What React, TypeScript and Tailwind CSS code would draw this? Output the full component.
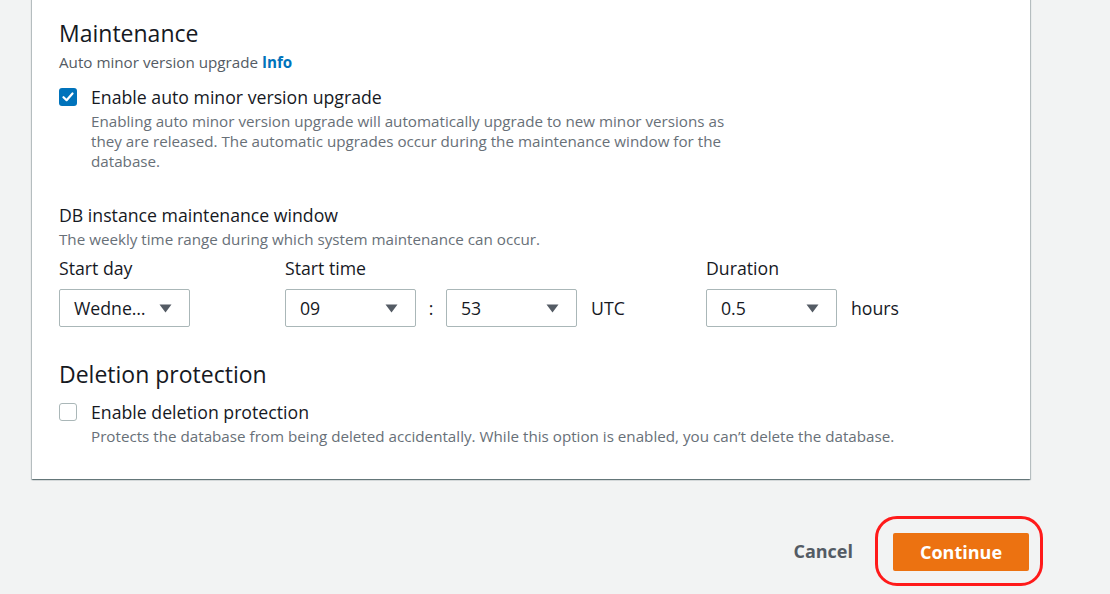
import React from 'react';

const Caret = () => (
  <svg width="13" height="9" viewBox="0 0 13 9" className="shrink-0">
    <path d="M0.5 0.5 H12.5 L6.5 8.5 Z" fill="#545b64" />
  </svg>
);

const Select: React.FC<{ value: string }> = ({ value }) => (
  <div className="flex h-[38px] w-[131px] items-center justify-between rounded-[2px] border border-[#aab7b8] bg-white pl-[14px] pr-[17px] text-[17.7px] text-[#16191f]">
    <span>{value}</span>
    <Caret />
  </div>
);

const CheckBox: React.FC<{ checked?: boolean }> = ({ checked }) =>
  checked ? (
    <div className="flex h-[18px] w-[18px] shrink-0 items-center justify-center rounded-[3px] bg-[#0073bb]">
      <svg width="12" height="10" viewBox="0 0 12 10">
        <path d="M1.5 5.2 L4.6 8.2 L10.5 1.5" fill="none" stroke="white" strokeWidth="2.2" strokeLinecap="round" strokeLinejoin="round" />
      </svg>
    </div>
  ) : (
    <div className="h-[18px] w-[18px] shrink-0 rounded-[3px] border border-[#aab7b8] bg-white" />
  );

const App: React.FC = () => {
  return (
    <div
      className="h-[594px] w-[1110px] overflow-hidden bg-[#f2f3f3] text-[#16191f]"
      style={{ fontFamily: '"Open Sans", "Noto Sans", Arial, sans-serif' }}
    >
      {/* Card */}
      <div className="-mt-[4px] ml-[32px] w-[998px] bg-white pl-[27px] pr-[26px] pt-[23px] pb-[33px] shadow-[0_1px_1px_0_rgba(0,28,36,0.35),1px_1px_1px_0_rgba(0,28,36,0.2),-1px_1px_1px_0_rgba(0,28,36,0.2)]">
        {/* Maintenance */}
        <h2 className="text-[23px] leading-[28px]">Maintenance</h2>
        <div className="mt-[5px] text-[15.2px] leading-[20px] text-[#545b64]">
          Auto minor version upgrade <span className="font-bold text-[#0073bb]">Info</span>
        </div>

        <div className="mt-[13px] flex gap-[14px]">
          <div className="pt-[3px]">
            <CheckBox checked />
          </div>
          <div>
            <div className="text-[17.7px] leading-[24px]">Enable auto minor version upgrade</div>
            <p className="mt-[2px] w-[660px] text-[15.2px] leading-[20px] text-[#687078]">
              Enabling auto minor version upgrade will automatically upgrade to new minor versions as
              they are released. The automatic upgrades occur during the maintenance window for the
              database.
            </p>
          </div>
        </div>

        <div className="mt-[32px] text-[17.7px] leading-[24px]">DB instance maintenance window</div>
        <div className="mt-[2px] text-[15.2px] leading-[20px] text-[#687078]">
          The weekly time range during which system maintenance can occur.
        </div>

        <div className="mt-[7px] flex">
          <div className="w-[226px]">
            <div className="text-[17.7px] leading-[24px]">Start day</div>
            <div className="mt-[9px]">
              <Select value="Wedne…" />
            </div>
          </div>
          <div className="w-[421px]">
            <div className="text-[17.7px] leading-[24px]">Start time</div>
            <div className="mt-[9px] flex items-center">
              <Select value="09" />
              <span className="w-[30px] text-center text-[17.7px]">:</span>
              <Select value="53" />
              <span className="ml-[14px] text-[17.7px]">UTC</span>
            </div>
          </div>
          <div>
            <div className="text-[17.7px] leading-[24px]">Duration</div>
            <div className="mt-[9px] flex items-center">
              <Select value="0.5" />
              <span className="ml-[14px] text-[17.7px]">hours</span>
            </div>
          </div>
        </div>

        {/* Deletion protection */}
        <h2 className="mt-[33px] text-[23px] leading-[28px]">Deletion protection</h2>
        <div className="mt-[12px] flex gap-[14px]">
          <div className="pt-[3px]">
            <CheckBox />
          </div>
          <div>
            <div className="text-[17.7px] leading-[24px]">Enable deletion protection</div>
            <p className="mt-[2px] text-[15.2px] leading-[20px] text-[#687078]">
              Protects the database from being deleted accidentally. While this option is enabled, you can’t delete the database.
            </p>
          </div>
        </div>
      </div>

      {/* Footer */}
      <div className="mt-[37px] flex items-center justify-end gap-[22px] pr-[67px]">
        <button className="text-[18px] font-bold text-[#545b64]">Cancel</button>
        <div className="rounded-[22px] border-[3px] border-[#ff1a1a] pb-[12px] pl-[15px] pr-[11px] pt-[14px]">
          <button className="h-[38px] w-[136px] rounded-[2px] bg-[#ec7211] text-[18px] font-bold text-white">
            Continue
          </button>
        </div>
      </div>
    </div>
  );
};

export default App;
